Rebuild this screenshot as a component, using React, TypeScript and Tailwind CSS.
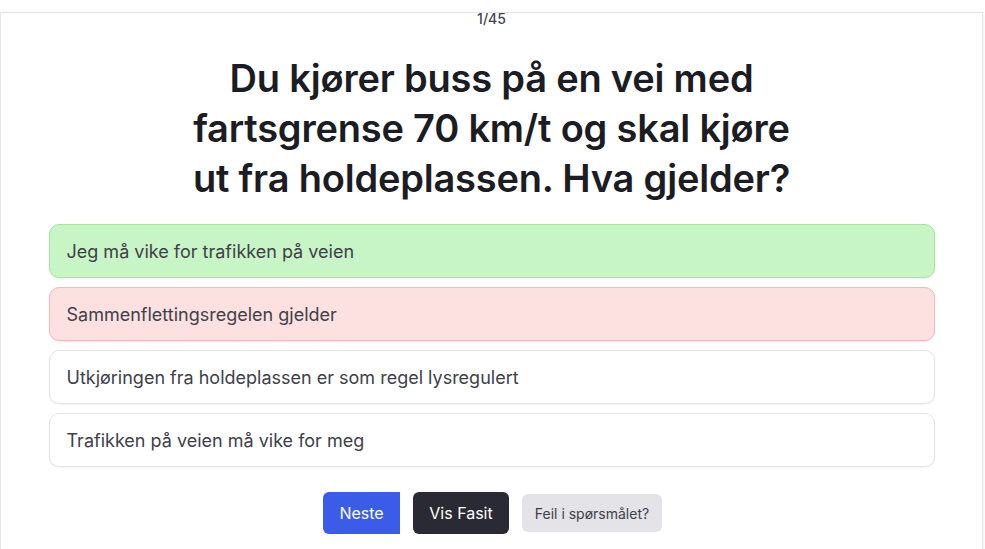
import React from "react";

const options = [
  { text: "Jeg må vike for trafikken på veien", cls: "bg-[#c8f5c6] border-[#a6e3a3]" },
  { text: "Sammenflettingsregelen gjelder", cls: "bg-[#fde0e0] border-[#f9b8b8]" },
  { text: "Utkjøringen fra holdeplassen er som regel lysregulert", cls: "bg-white border-[#e4e4e7]" },
  { text: "Trafikken på veien må vike for meg", cls: "bg-white border-[#e4e4e7]" },
];

export default function App() {
  return (
    <div className="w-[985px] h-[549px] overflow-hidden bg-white pt-3" style={{ fontFamily: "Inter, 'Noto Sans', sans-serif" }}>
      <div className="mr-[1px] w-[983px] h-[560px] border-t border-l border-r border-[#e5e5e5] shadow-[0_1px_4px_rgba(0,0,0,0.08)] bg-white flex flex-col items-center">
        <div className="text-[14px] leading-[12px] font-medium text-[#44444f]">1/45</div>
        <h1 className="mt-[28px] w-[640px] text-center text-[38px] leading-[50px] font-semibold text-[#1c1c24] tracking-[-0.2px]">
          Du kjører buss på en vei med fartsgrense 70 km/t og skal kjøre ut fra holdeplassen. Hva gjelder?
        </h1>
        <div className="mt-[21px] w-[886px] flex flex-col gap-[9px]">
          {options.map((o) => (
            <div
              key={o.text}
              className={`h-[54px] flex items-center px-[17px] rounded-[10px] border shadow-[0_1px_2px_rgba(0,0,0,0.06)] text-[18px] text-[#404049] ${o.cls}`}
            >
              {o.text}
            </div>
          ))}
        </div>
        <div className="mt-[25px] ml-[2px] flex items-center gap-[13px]">
          <button className="h-[42px] w-[77px] rounded-l-[6px] bg-[#3a5ce9] text-white text-[16px]">Neste</button>
          <button className="h-[42px] w-[96px] rounded-[6px] bg-[#2a2a35] text-white text-[16px]">Vis Fasit</button>
          <button className="h-[38px] w-[140px] rounded-[6px] bg-[#e3e3e8] text-[#3f3f4a] text-[14px]">Feil i spørsmålet?</button>
        </div>
      </div>
    </div>
  );
}
